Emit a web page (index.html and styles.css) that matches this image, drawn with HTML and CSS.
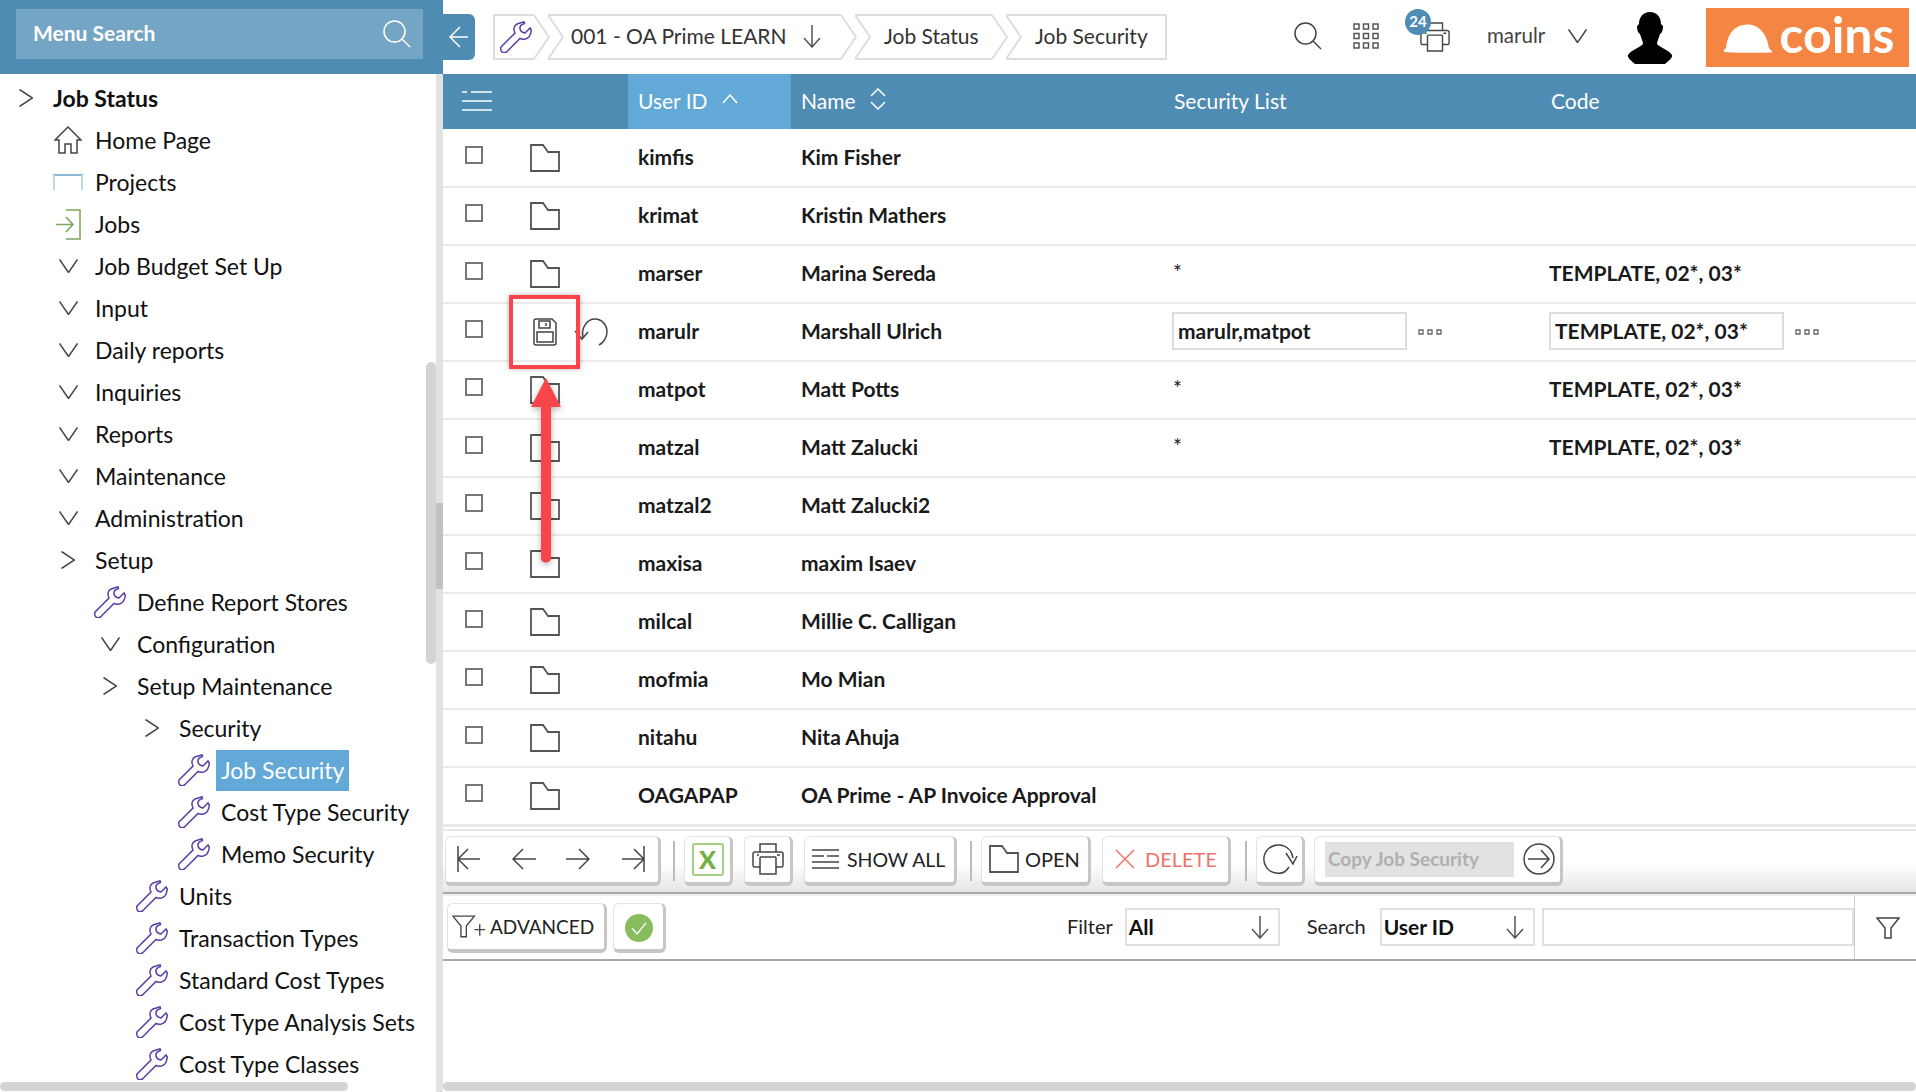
FILE: index.html
```html
<!DOCTYPE html>
<html lang="en">
<head>
    <meta charset="UTF-8">
    <title>Job Security</title>
    <link rel="stylesheet" href="styles.css">
</head>
<body>
    <!-- shared icons -->
    <svg class="defs" width="0" height="0">
        <symbol id="i-wrench" viewBox="0 0 32 32"><path d="M1 26 15 12C13 8 14 4.500 17 3L24 .8 24.500 2.500C21 3.500 19.500 5 20 8 20.500 10 22 11.500 25 12L30 7 31.300 9C31 13 29 17 25.500 18 23 18.500 21 18 20 17.500L6.500 31C4 32.500 1 31.500 .8 28.500.7 27.500.8 26.500 1 26Z"/></symbol>
        <symbol id="i-right" viewBox="0 0 14 18"><path d="M.5.5 13.5 9 .5 17.5"/></symbol>
        <symbol id="i-down" viewBox="0 0 19 14"><path d="M.5.5 9.500 13.500 18.500.5"/></symbol>
        <symbol id="i-folder" viewBox="0 0 30 28"><path d="M1 27V1H13L18 8H29V27Z"/></symbol>
        <symbol id="i-arrow-down" viewBox="0 0 20 24"><path d="M10 1V23M2 14 10 23 18 14"/></symbol>
        <symbol id="i-dots" viewBox="0 0 24 6"><path d="M1 1H5V5H1ZM10 1H14V5H10ZM19 1H23V5H19Z"/></symbol>
        <symbol id="i-printer" viewBox="0 0 32 32"><path d="M8 9V1H24V9M8 24H2C1 24 1 23 1 22V11C1 10 2 9 3 9H29C30 9 31 10 31 11V22C31 23 31 24 30 24H24M8 14H24M8 14V31H24V14M5 12H7M25 12H28"/></symbol>
        <symbol id="i-search" viewBox="0 0 28 28"><circle cx="11.500" cy="11.500" r="10.500"/><path d="M19 19 27 27"/></symbol>
    </svg>

    <div class="app">
        <!-- Menu -->
        <aside class="sidebar">
            <div class="menu-head">
                <div class="menu-search">
                    <span>Menu Search</span>
                    <svg class="ic ic-menu-search"><use href="#i-search"/></svg>
                </div>
            </div>
            <div class="tree">
                <div class="tree-row lv0 strong"><span class="slot"><svg class="ic ic-right"><use href="#i-right"/></svg></span>Job Status</div>
                <div class="tree-row lv1"><span class="slot"><svg class="ic ic-home" viewBox="0 0 28 28"><path d="M1 14 14 1 27 14H23V27H17V18H11V27H5V14Z"/></svg></span>Home Page</div>
                <div class="tree-row lv1"><span class="slot"><svg class="ic-projects" viewBox="0 0 30 16"><path class="p-top" d="M0 1H30"/><path class="p-side" d="M1 1V16M29 1V16"/></svg></span>Projects</div>
                <div class="tree-row lv1"><span class="slot"><svg class="ic-jobs" viewBox="0 0 26 31"><path d="M11 1H25V30H11M1 15.500H18M11 8 18 15.500 11 23"/></svg></span>Jobs</div>
                <div class="tree-row lv1"><span class="slot"><svg class="ic ic-chev"><use href="#i-down"/></svg></span>Job Budget Set Up</div>
                <div class="tree-row lv1"><span class="slot"><svg class="ic ic-chev"><use href="#i-down"/></svg></span>Input</div>
                <div class="tree-row lv1"><span class="slot"><svg class="ic ic-chev"><use href="#i-down"/></svg></span>Daily reports</div>
                <div class="tree-row lv1"><span class="slot"><svg class="ic ic-chev"><use href="#i-down"/></svg></span>Inquiries</div>
                <div class="tree-row lv1"><span class="slot"><svg class="ic ic-chev"><use href="#i-down"/></svg></span>Reports</div>
                <div class="tree-row lv1"><span class="slot"><svg class="ic ic-chev"><use href="#i-down"/></svg></span>Maintenance</div>
                <div class="tree-row lv1"><span class="slot"><svg class="ic ic-chev"><use href="#i-down"/></svg></span>Administration</div>
                <div class="tree-row lv1"><span class="slot"><svg class="ic ic-right"><use href="#i-right"/></svg></span>Setup</div>
                <div class="tree-row lv2"><span class="slot"><svg class="wrench"><use href="#i-wrench"/></svg></span>Define Report Stores</div>
                <div class="tree-row lv2"><span class="slot"><svg class="ic ic-chev"><use href="#i-down"/></svg></span>Configuration</div>
                <div class="tree-row lv2"><span class="slot"><svg class="ic ic-right"><use href="#i-right"/></svg></span>Setup Maintenance</div>
                <div class="tree-row lv3"><span class="slot"><svg class="ic ic-right"><use href="#i-right"/></svg></span>Security</div>
                <div class="tree-row lv4"><span class="slot"><svg class="wrench"><use href="#i-wrench"/></svg></span><span class="selected">Job Security</span></div>
                <div class="tree-row lv4"><span class="slot"><svg class="wrench"><use href="#i-wrench"/></svg></span>Cost Type Security</div>
                <div class="tree-row lv4"><span class="slot"><svg class="wrench"><use href="#i-wrench"/></svg></span>Memo Security</div>
                <div class="tree-row lv3"><span class="slot"><svg class="wrench"><use href="#i-wrench"/></svg></span>Units</div>
                <div class="tree-row lv3"><span class="slot"><svg class="wrench"><use href="#i-wrench"/></svg></span>Transaction Types</div>
                <div class="tree-row lv3"><span class="slot"><svg class="wrench"><use href="#i-wrench"/></svg></span>Standard Cost Types</div>
                <div class="tree-row lv3"><span class="slot"><svg class="wrench"><use href="#i-wrench"/></svg></span>Cost Type Analysis Sets</div>
                <div class="tree-row lv3"><span class="slot"><svg class="wrench"><use href="#i-wrench"/></svg></span>Cost Type Classes</div>
            </div>
            <div class="scroll-v-menu"></div>
            <div class="scroll-h-menu"></div>
            <div class="split-thumb"></div>
        </aside>

        <main class="content">
            <!-- Top bar -->
            <header class="topbar">
                <div class="back-tab"><svg class="ic ic-back" viewBox="0 0 20 22"><path d="M19 11H1M11 1 1 11 11 21"/></svg></div>
                <nav class="crumbs">
                    <div class="crumb crumb-home"><svg class="wrench"><use href="#i-wrench"/></svg></div>
                    <div class="crumb crumb-job">001 - OA Prime LEARN<svg class="ic ic-crumb-down"><use href="#i-arrow-down"/></svg></div>
                    <div class="crumb crumb-status">Job Status</div>
                    <div class="crumb crumb-last">Job Security</div>
                </nav>
                <div class="top-tools">
                    <svg class="ic ic-top-search"><use href="#i-search"/></svg>
                    <svg class="ic ic-apps" viewBox="0 0 26 26"><path d="M1 1H6V6H1ZM10.500 1H15.500V6H10.500ZM20 1H25V6H20ZM1 10.500H6V15.500H1ZM10.500 10.500H15.500V15.500H10.500ZM20 10.500H25V15.500H20ZM1 20H6V25H1ZM10.500 20H15.500V25H10.500ZM20 20H25V25H20Z"/></svg>
                    <div class="print-tool">
                        <svg class="ic ic-top-print"><use href="#i-printer"/></svg>
                        <span class="badge">24</span>
                    </div>
                    <span class="user-name">marulr</span>
                    <svg class="ic ic-chev"><use href="#i-down"/></svg>
                    <svg class="avatar" viewBox="0 0 46 52"><path d="M23 0C30 0 34 5 34 12L36 14C36 18 35 21 33 22 32 26 30 29 30 32 34 36 42 38 45 43 46 45 42 49 38 52H8C4 49 0 45 1 43 4 38 12 36 16 32 16 29 14 26 13 22 11 21 10 18 10 14L12 12C12 5 16 0 23 0Z"/></svg>
                    <div class="logo">
                        <svg class="helmet" viewBox="0 0 50 29"><path d="M1 28C0 27 1 25 3 24.500 4 12 10 1 24 .5 36 0 44 10 46 24L49 27.500C50 28 49 28.500 48 28.500 32 29 16 29 1 28Z"/></svg>
                        <span>coins</span>
                    </div>
                </div>
            </header>

            <!-- Grid -->
            <div class="grid-head">
                <div class="col-tools"><svg class="ic-list" viewBox="0 0 30 20"><path d="M0 1H5M9 1H30M0 10H30M0 19H30"/></svg></div>
                <div class="col-user sorted">User ID<svg class="sort" viewBox="0 0 16 10"><path d="M1 9 8 1 15 9"/></svg></div>
                <div class="col-name">Name<svg class="sort sort-both" viewBox="0 0 16 22"><path d="M1 8 8 1 15 8M1 14 8 21 15 14"/></svg></div>
                <div class="col-list">Security List</div>
                <div class="col-code">Code</div>
            </div>
            <div class="grid-body">
                <div class="grid-row">
                    <div class="col-tools"><span class="check"></span><svg class="folder"><use href="#i-folder"/></svg></div>
                    <div class="col-user">kimfis</div><div class="col-name">Kim Fisher</div><div class="col-list"></div><div class="col-code"></div>
                </div>
                <div class="grid-row">
                    <div class="col-tools"><span class="check"></span><svg class="folder"><use href="#i-folder"/></svg></div>
                    <div class="col-user">krimat</div><div class="col-name">Kristin Mathers</div><div class="col-list"></div><div class="col-code"></div>
                </div>
                <div class="grid-row">
                    <div class="col-tools"><span class="check"></span><svg class="folder"><use href="#i-folder"/></svg></div>
                    <div class="col-user">marser</div><div class="col-name">Marina Sereda</div><div class="col-list star">*</div><div class="col-code">TEMPLATE, 02*, 03*</div>
                </div>
                <div class="grid-row editing">
                    <div class="col-tools">
                        <span class="check"></span>
                        <svg class="ic save" viewBox="0 0 24 28"><path d="M3 1H19L23 5V25C23 26 22 27 21 27H3C2 27 1 26 1 25V3C1 2 2 1 3 1ZM6 3H17V10H6ZM4 14H20V24H4ZM13 5V8"/></svg>
                        <svg class="ic undo" viewBox="0 0 35 28"><path d="M9 19C7 10 13 1 21 1 28 1 33 7 33 14 33 20 29 25 25 27M1 13 8 21 14 14"/></svg>
                    </div>
                    <div class="col-user">marulr</div><div class="col-name">Marshall Ulrich</div>
                    <div class="col-list"><div class="cell-input">marulr,matpot</div><svg class="ic dots"><use href="#i-dots"/></svg></div>
                    <div class="col-code"><div class="cell-input">TEMPLATE, 02*, 03*</div><svg class="ic dots"><use href="#i-dots"/></svg></div>
                </div>
                <div class="grid-row">
                    <div class="col-tools"><span class="check"></span><svg class="folder"><use href="#i-folder"/></svg></div>
                    <div class="col-user">matpot</div><div class="col-name">Matt Potts</div><div class="col-list star">*</div><div class="col-code">TEMPLATE, 02*, 03*</div>
                </div>
                <div class="grid-row">
                    <div class="col-tools"><span class="check"></span><svg class="folder"><use href="#i-folder"/></svg></div>
                    <div class="col-user">matzal</div><div class="col-name">Matt Zalucki</div><div class="col-list star">*</div><div class="col-code">TEMPLATE, 02*, 03*</div>
                </div>
                <div class="grid-row">
                    <div class="col-tools"><span class="check"></span><svg class="folder"><use href="#i-folder"/></svg></div>
                    <div class="col-user">matzal2</div><div class="col-name">Matt Zalucki2</div><div class="col-list"></div><div class="col-code"></div>
                </div>
                <div class="grid-row">
                    <div class="col-tools"><span class="check"></span><svg class="folder"><use href="#i-folder"/></svg></div>
                    <div class="col-user">maxisa</div><div class="col-name">maxim Isaev</div><div class="col-list"></div><div class="col-code"></div>
                </div>
                <div class="grid-row">
                    <div class="col-tools"><span class="check"></span><svg class="folder"><use href="#i-folder"/></svg></div>
                    <div class="col-user">milcal</div><div class="col-name">Millie C. Calligan</div><div class="col-list"></div><div class="col-code"></div>
                </div>
                <div class="grid-row">
                    <div class="col-tools"><span class="check"></span><svg class="folder"><use href="#i-folder"/></svg></div>
                    <div class="col-user">mofmia</div><div class="col-name">Mo Mian</div><div class="col-list"></div><div class="col-code"></div>
                </div>
                <div class="grid-row">
                    <div class="col-tools"><span class="check"></span><svg class="folder"><use href="#i-folder"/></svg></div>
                    <div class="col-user">nitahu</div><div class="col-name">Nita Ahuja</div><div class="col-list"></div><div class="col-code"></div>
                </div>
                <div class="grid-row">
                    <div class="col-tools"><span class="check"></span><svg class="folder"><use href="#i-folder"/></svg></div>
                    <div class="col-user">OAGAPAP</div><div class="col-name">OA Prime - AP Invoice Approval</div><div class="col-list"></div><div class="col-code"></div>
                </div>
            </div>

            <!-- Action toolbar -->
            <div class="toolbar">
                <div class="btn btn-nav">
                    <svg class="ic" viewBox="0 0 24 28"><path d="M1 1V27M23 14H1M11 4 1 14 11 24"/></svg>
                    <svg class="ic" viewBox="0 0 24 28"><path d="M24 14H1M11 4 1 14 11 24"/></svg>
                    <svg class="ic" viewBox="0 0 24 28"><path d="M0 14H23M13 4 23 14 13 24"/></svg>
                    <svg class="ic" viewBox="0 0 24 28"><path d="M23 1V27M1 14H23M13 4 23 14 13 24"/></svg>
                </div>
                <span class="sep"></span>
                <div class="btn btn-excel"><span class="excel">X</span></div>
                <div class="btn btn-print"><svg class="ic ic-btn-print"><use href="#i-printer"/></svg></div>
                <div class="btn btn-show"><svg class="ic ic-lines" viewBox="0 0 27 20"><path d="M0 1H27M0 7H12M15 7H27M0 13H27M0 19H27"/></svg>SHOW ALL</div>
                <span class="sep"></span>
                <div class="btn btn-open"><svg class="folder"><use href="#i-folder"/></svg>OPEN</div>
                <div class="btn btn-delete"><svg class="ic ic-x" viewBox="0 0 20 20"><path d="M1 1 19 19M19 1 1 19"/></svg>DELETE</div>
                <span class="sep"></span>
                <div class="btn btn-refresh"><svg class="ic" viewBox="0 0 36 32"><path d="M27 24C24 29 19 31 14 30 6 29 1 22 2 14 3 7 10 1 18 2 25 3 30 8 31 15M24 10 31 21 35 13"/></svg></div>
                <div class="btn btn-copy"><span class="copy-label">Copy Job Security</span><svg class="ic ic-go" viewBox="0 0 32 32"><circle cx="16" cy="16" r="15"/><path d="M5 16H26M18 7 26 16 18 25"/></svg></div>
            </div>

            <!-- Filter row -->
            <div class="filterbar">
                <div class="btn btn-adv"><svg class="ic" viewBox="0 0 38 26"><path d="M1 2H25L16 13V25H10V13ZM25 17H37M31 11V24"/></svg>ADVANCED</div>
                <div class="btn btn-ok"><svg class="ok" viewBox="0 0 28 28"><circle cx="14" cy="14" r="14"/><path d="M7 14 12 20 21 9"/></svg></div>
                <label class="filter-label filter-first">Filter</label>
                <div class="select select-filter">All<svg class="ic ic-crumb-down"><use href="#i-arrow-down"/></svg></div>
                <label class="filter-label filter-second">Search</label>
                <div class="select select-search">User ID<svg class="ic ic-crumb-down"><use href="#i-arrow-down"/></svg></div>
                <div class="search-text"></div>
                <div class="funnel-cell"><svg class="ic" viewBox="0 0 24 22"><path d="M1 1H23L15 11V21H9V11Z"/></svg></div>
            </div>
            <div class="scroll-h-main"></div>
        </main>
    </div>

    <!-- Red annotation -->
    <div class="callout-box"></div>
    <svg class="callout-arrow" viewBox="0 0 30 190"><path d="M15 0 30 29H20V180C20 186 10 186 10 180V29H0Z"/></svg>
</body>
</html>
```

FILE: styles.css
```css
* {
    box-sizing: border-box;
}

body {
    margin: 0;
    height: 1092px;
    overflow: hidden;
    position: relative;
    font-family: 'Lato', sans-serif;
    color: #111;
    background: #fff;
}

.defs {
    position: absolute;
}

.app {
    display: flex;
    height: 100%;
}

.ic {
    fill: none;
    stroke: #444;
    stroke-width: 1.5;
}

.wrench {
    width: 32px;
    height: 32px;
    fill: none;
    stroke: #5a3ea6;
    stroke-width: 1.5;
}

/* Menu */
.sidebar {
    width: 443px;
    flex: none;
    position: relative;
    overflow: hidden;
}

.menu-head {
    height: 74px;
    padding: 9px 20px 15px 16px;
    background: #4f8cb3;
}

.menu-search {
    height: 50px;
    display: flex;
    align-items: center;
    justify-content: space-between;
    padding: 0 12px 0 17px;
    background: #75a5c4;
    color: #fff;
    font-size: 21px;
    font-weight: 700;
}

.menu-search span {
    margin-top: -3px;
}

.ic-menu-search {
    width: 28px;
    height: 28px;
    stroke: #fff;
}

.tree {
    padding-top: 3px;
}

.tree-row {
    display: flex;
    align-items: center;
    gap: 11px;
    height: 42px;
    font-size: 23px;
    white-space: nowrap;
}

.tree-row.strong {
    font-weight: 700;
}

.lv0 { padding-left: 10px; }
.lv1 { padding-left: 52px; }
.lv2 { padding-left: 94px; }
.lv3 { padding-left: 136px; }
.lv4 { padding-left: 178px; }

.slot {
    width: 32px;
    flex: none;
    display: flex;
    justify-content: center;
    align-items: center;
}

.ic-right {
    width: 14px;
    height: 18px;
}

.ic-chev {
    width: 19px;
    height: 14px;
}

.ic-home {
    width: 28px;
    height: 28px;
}

.ic-projects {
    width: 30px;
    height: 16px;
    fill: none;
    stroke-width: 2;
}

.p-top {
    stroke: #8db7d4;
}

.p-side {
    stroke: #bcd6e8;
}

.ic-jobs {
    width: 26px;
    height: 31px;
    fill: none;
    stroke: #7aa65a;
    stroke-width: 1.5;
}

.selected {
    margin-left: -5px;
    padding: 0 5px;
    height: 41px;
    line-height: 41px;
    background: #62a9d8;
    color: #fff;
}

.scroll-v-menu {
    position: absolute;
    top: 362px;
    left: 426px;
    width: 10px;
    height: 302px;
    border-radius: 5px;
    background: #d4d4d4;
}

.scroll-h-menu {
    position: absolute;
    left: 0;
    bottom: 1px;
    width: 348px;
    height: 9px;
    border-radius: 5px;
    background: #d4d4d4;
}

.split-thumb {
    position: absolute;
    top: 74px;
    right: 0;
    bottom: 0;
    width: 7px;
    background: linear-gradient(#e2e2e2 429px, #c2c2c2 429px, #c2c2c2 515px, #e2e2e2 515px);
}

/* Top bar */
.content {
    flex: 1;
    min-width: 0;
    position: relative;
}

.topbar {
    height: 74px;
    display: flex;
    align-items: flex-start;
}

.back-tab {
    margin-top: 14px;
    width: 32px;
    height: 46px;
    display: flex;
    align-items: center;
    justify-content: center;
    background: #4f8cb3;
    border-radius: 0 6px 6px 0;
}

.ic-back {
    width: 20px;
    height: 22px;
    stroke: #fff;
}

.crumbs {
    margin: 14px 0 0 18px;
    display: flex;
    gap: 14px;
    font-size: 21px;
    color: #333;
}

.crumb {
    position: relative;
    height: 46px;
    display: flex;
    align-items: center;
    padding-bottom: 3px;
    border-top: 2px solid #ddd;
    border-bottom: 2px solid #ddd;
    white-space: nowrap;
}

/* chevron ends on the breadcrumb pieces */
.crumb::before,
.crumb::after {
    content: "";
    position: absolute;
    top: -2px;
    width: 16px;
    height: 46px;
    background: url("data:image/svg+xml,%3Csvg xmlns='http://www.w3.org/2000/svg' width='16' height='46'%3E%3Cpath d='M0 1 15 23 0 45' fill='none' stroke='%23ddd' stroke-width='2'/%3E%3C/svg%3E");
}

.crumb::before {
    left: 0;
}

.crumb::after {
    left: 100%;
}

.crumb-home {
    width: 41px;
    padding: 0 0 0 5px;
    border-left: 2px solid #ddd;
}

.crumb-home::before,
.crumb-last::after {
    display: none;
}

.crumb-home .wrench {
    flex: none;
}

.crumb-job {
    width: 293px;
    padding-left: 23px;
}

.ic-crumb-down {
    width: 20px;
    height: 24px;
    flex: none;
    margin-left: auto;
    stroke: #555;
}

.crumb-job .ic-crumb-down {
    margin: 0 0 0 auto;
    transform: translateX(-19px);
}

.crumb-status {
    width: 137px;
    padding-left: 29px;
}

.crumb-last {
    width: 161px;
    padding-left: 29px;
    border-right: 2px solid #ddd;
}

.top-tools {
    flex: 1;
    height: 74px;
    display: flex;
    align-items: center;
    padding-left: 127px;
}

.ic-top-search {
    width: 28px;
    height: 28px;
    margin-top: -2px;
}

.ic-apps {
    width: 26px;
    height: 26px;
    margin-left: 31px;
    stroke: #555;
    margin-top: -2px;
}

.print-tool {
    position: relative;
    width: 30px;
    height: 30px;
    margin-left: 41px;
    margin-top: -1px;
}

.ic-top-print {
    width: 30px;
    height: 30px;
}

.badge {
    position: absolute;
    top: -13px;
    left: -15px;
    width: 26px;
    height: 26px;
    line-height: 24px;
    border-radius: 50%;
    background: #4f8cb3;
    color: #fff;
    font-size: 15px;
    font-weight: 700;
    text-align: center;
}

.user-name {
    margin-left: 37px;
    margin-right: 23px;
    margin-top: -4px;
    font-size: 20.5px;
    color: #444;
}

.top-tools > .ic-chev {
    margin-top: -2px;
}

.avatar {
    width: 46px;
    height: 52px;
    margin-left: 40px;
    margin-top: 2px;
    fill: #000;
}

.logo {
    width: 203px;
    height: 59px;
    margin: 1px 0 0 33px;
    display: flex;
    align-items: center;
    gap: 6px;
    padding-left: 17px;
    background: #f48542;
    color: #fff;
    font-size: 50px;
    font-weight: 700;
    line-height: 1;
}

.helmet {
    width: 50px;
    height: 29px;
    fill: #fff;
    flex: none;
    margin-top: 1px;
}

.logo span {
    margin-top: -7px;
}

/* Grid */
.grid-head,
.grid-row {
    display: grid;
    grid-template-columns: 185px 163px 381px 377px 1fr;
    align-items: center;
}

.grid-head {
    height: 55px;
    background: #4f8cb3;
    color: #fff;
    font-size: 21px;
}

.grid-head > div {
    height: 100%;
    display: flex;
    align-items: center;
    padding-bottom: 2px;
}

.grid-head .col-list {
    padding-left: 2px;
}

.grid-head .col-code {
    padding-left: 2px;
}

.sorted {
    background: #62a9d8;
}

.ic-list {
    width: 30px;
    height: 20px;
    margin-left: 19px;
    fill: none;
    stroke: #fff;
    stroke-width: 1.5;
}

.sort {
    width: 16px;
    height: 10px;
    margin-left: 14px;
    margin-top: -4px;
    fill: none;
    stroke: #fff;
    stroke-width: 1.5;
}

.sort-both {
    height: 22px;
}

.col-user {
    padding-left: 10px;
}

.col-name {
    padding-left: 10px;
}

.grid-body {
    padding-top: 1px;
}

.grid-row {
    height: 58px;
    border-bottom: 2px solid #eaeaea;
    font-size: 21px;
    font-weight: 700;
    color: #1a1a1a;
}

.grid-row .col-user,
.grid-row .col-name,
.grid-row .col-code {
    margin-top: -3px;
}

.grid-row .col-tools {
    display: flex;
    align-items: center;
    position: relative;
}

.check {
    width: 18px;
    height: 18px;
    margin: -6px 0 0 22px;
    border: 2px solid #777;
    flex: none;
}

.folder {
    width: 30px;
    height: 28px;
    fill: none;
    stroke: #555;
    stroke-width: 1.8;
    flex: none;
}

.col-tools .folder {
    margin-left: 47px;
}

.save {
    width: 24px;
    height: 28px;
    margin-left: 50px;
}

.undo {
    width: 35px;
    height: 28px;
    margin-left: 17px;
}

.grid-row .star {
    padding-left: 1px;
    margin-top: -5px;
    font-weight: 400;
}

.editing .col-list,
.editing .col-code {
    display: flex;
    align-items: center;
    margin-top: 0;
}

.cell-input {
    width: 235px;
    height: 38px;
    line-height: 33px;
    padding-left: 4px;
    border: 2px solid #ddd;
    margin-top: -2px;
}

.dots {
    width: 24px;
    height: 6px;
    margin-left: 11px;
    stroke-width: 1.3;
    stroke: #666;
}

/* Toolbars */
.toolbar,
.filterbar {
    display: flex;
    align-items: center;
}

.toolbar {
    height: 69px;
    margin-top: -1px;
    padding: 9px 0 7px 2px;
    border-top: 2px solid #e8e8e8;
    border-bottom: 2px solid #aaa;
    background: linear-gradient(#fff 55%, #e6e6e6);
    box-shadow: inset 0 2px 0 #fff, inset 0 4px 0 #e8e8e8;
}

.btn {
    height: 50px;
    display: flex;
    align-items: center;
    flex: none;
    background: #fff;
    border: 1px solid #e2e2e2;
    border-right: 3px solid #c6c6c6;
    border-bottom: 4px solid #c6c6c6;
    border-radius: 6px;
    font-size: 20px;
    color: #222;
    margin-right: 11px;
}

.sep {
    width: 2px;
    height: 40px;
    margin-right: 9px;
    background: #bbb;
    flex: none;
}

.btn-nav {
    width: 216px;
    padding: 0 13px 0 11px;
    justify-content: space-between;
    margin-right: 12px;
}

.btn-nav .ic {
    width: 24px;
    height: 28px;
}

.btn-excel {
    width: 49px;
    justify-content: center;
}

.excel {
    width: 32px;
    height: 33px;
    border: 2px solid #a4cf84;
    border-radius: 3px;
    text-align: center;
    line-height: 29px;
    color: #72b043;
    font-size: 25px;
    font-weight: 900;
}

.btn-print {
    width: 49px;
    justify-content: center;
}

.ic-btn-print {
    width: 32px;
    height: 32px;
}

.btn-show {
    width: 153px;
    padding-left: 7px;
    margin-right: 13px;
    font-size: 19.5px;
}

.ic-lines {
    width: 27px;
    height: 20px;
    margin-right: 8px;
}

.btn-open {
    width: 110px;
    padding-left: 7px;
}

.btn-open .folder {
    margin-right: 6px;
}

.btn-delete {
    width: 129px;
    padding-left: 12px;
    margin-right: 14px;
    color: #f0736b;
}

.ic-x {
    width: 20px;
    height: 20px;
    margin-right: 10px;
    stroke: #f0736b;
}

.btn-refresh {
    width: 49px;
    justify-content: center;
    margin-right: 9px;
}

.btn-refresh .ic {
    width: 36px;
    height: 32px;
}

.btn-copy {
    width: 249px;
    padding-left: 10px;
    margin-right: 0;
}

.copy-label {
    width: 189px;
    height: 35px;
    line-height: 33px;
    padding-left: 3px;
    background: #e2e2e2;
    color: #b0b0b0;
    font-size: 19px;
    font-weight: 700;
}

.ic-go {
    width: 32px;
    height: 32px;
    margin-left: 9px;
}

.filterbar {
    height: 67px;
    padding: 2px 0 0 4px;
    border-bottom: 2px solid #aaa;
    box-shadow: inset 0 2px 0 #eee;
}

.btn-adv {
    width: 160px;
    padding-left: 4px;
    margin-right: 6px;
    font-size: 19px;
}

.btn-adv .ic {
    width: 34px;
    height: 24px;
    margin-right: 4px;
}

.btn-ok {
    width: 53px;
    justify-content: center;
    margin-right: 0;
}

.ok {
    width: 28px;
    height: 28px;
    margin-top: 3px;
    fill: #88bd5f;
    stroke: none;
}

.ok path {
    fill: none;
    stroke: #fff;
    stroke-width: 1.2;
}

.filter-label {
    font-size: 20px;
    color: #222;
}

.filter-first {
    margin-left: 401px;
    margin-right: 12px;
    margin-top: -4px;
}

.filter-second {
    margin-left: 27px;
    margin-right: 14px;
    margin-top: -4px;
}

.select {
    width: 155px;
    height: 38px;
    margin-top: -2px;
    display: flex;
    align-items: center;
    padding: 0 8px 0 2px;
    border: 2px solid #e0e0e0;
    font-size: 21px;
    font-weight: 700;
}

.search-text {
    width: 312px;
    height: 38px;
    margin: -2px 0 0 7px;
    border: 2px solid #e0e0e0;
}

.funnel-cell {
    flex: 1;
    height: 100%;
    display: flex;
    align-items: center;
    justify-content: center;
    padding-left: 6px;
    border-left: 1px solid #ccc;
}

.funnel-cell .ic {
    width: 24px;
    height: 22px;
}

.scroll-h-main {
    position: absolute;
    left: 0;
    right: 0;
    bottom: 1px;
    height: 9px;
    border-radius: 5px;
    background: #d4d4d4;
}

/* Red annotation */
.callout-box {
    position: absolute;
    left: 509px;
    top: 295px;
    width: 71px;
    height: 74px;
    border: 4px solid #f94449;
    box-shadow: 0 0 5px rgba(0, 0, 0, 0.3);
}

.callout-arrow {
    position: absolute;
    left: 531px;
    top: 378px;
    width: 30px;
    height: 190px;
    fill: #f94449;
    filter: drop-shadow(0 2px 3px rgba(0, 0, 0, 0.3));
}
```
